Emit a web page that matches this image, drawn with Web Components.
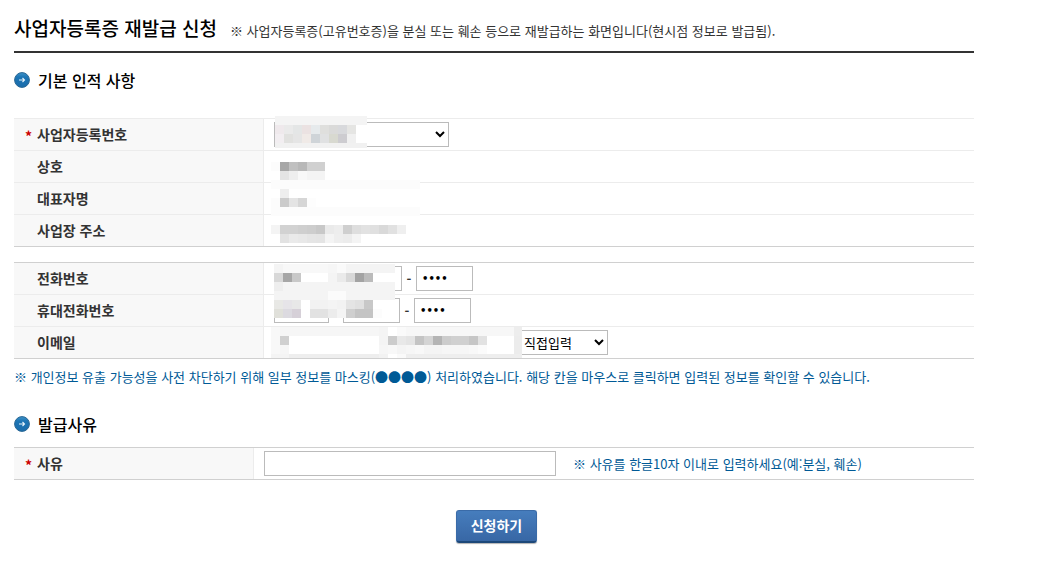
<!DOCTYPE html>
<html lang="ko">
<head>
<meta charset="UTF-8">
<meta name="viewport" content="width=device-width, initial-scale=1.0">
<title>사업자등록증 재발급 신청</title>
<style>
    body {
        margin: 0;
        background: #fff;
        color: #333;
        font: 13px/20px "Noto Sans CJK KR", sans-serif;
    }
</style>
</head>
<body>
<reissue-form></reissue-form>

<script>
class PageTitle extends HTMLElement {
    connectedCallback() {
        this.attachShadow({ mode: 'open' });
        this.shadowRoot.innerHTML = `
            <style>
                :host {
                    display: block;
                    border-bottom: 2px solid #333;
                }

                header {
                    display: flex;
                    align-items: baseline;
                    gap: 13px;
                    padding: 14px 0 9px;
                }

                h1 {
                    margin: 0;
                    font-size: 19px;
                    line-height: 28px;
                    font-weight: 500;
                    color: #000;
                }
            </style>
            <header>
                <h1><slot></slot></h1>
                <slot name="note"></slot>
            </header>
        `;
    }
}

class SectionTitle extends HTMLElement {
    connectedCallback() {
        this.attachShadow({ mode: 'open' });
        this.shadowRoot.innerHTML = `
            <style>
                :host {
                    display: block;
                }

                h2 {
                    display: flex;
                    align-items: center;
                    gap: 8px;
                    margin: 0;
                    font-size: 16px;
                    line-height: 24px;
                    font-weight: 500;
                    color: #000;
                }
            </style>
            <h2>
                <svg width="16" height="16" viewBox="0 0 16 16" aria-hidden="true">
                    <defs>
                        <linearGradient id="ball" x1="0" y1="0" x2="0" y2="1">
                            <stop offset="0" stop-color="#3f93c8"></stop>
                            <stop offset="0.3" stop-color="#1c75b5"></stop>
                            <stop offset="1" stop-color="#1a6cab"></stop>
                        </linearGradient>
                    </defs>
                    <circle cx="8" cy="8" r="7.4" fill="url(#ball)" stroke="#2a6794"></circle>
                    <path d="M5 8h5.5M8.5 6L10.5 8L8.5 10" fill="none" stroke="#e4f1fa" stroke-width="1.1"></path>
                </svg>
                <slot></slot>
            </h2>
        `;
    }
}

class FormRow extends HTMLElement {
    connectedCallback() {
        this.attachShadow({ mode: 'open' });
        const star = this.hasAttribute('required') ? '*' : '';
        this.shadowRoot.innerHTML = `
            <style>
                :host {
                    display: grid;
                    grid-template-columns: var(--label-width, 250px) 1fr;
                    min-height: 31px;
                    border-top: 1px solid #ececec;
                }

                .head {
                    display: grid;
                    grid-template-columns: 12px 1fr;
                    align-items: center;
                    padding: 0 0 2px 11px;
                    background: #f8f8f8;
                    border-right: 1px solid #ececec;
                    font-size: 14px;
                    font-weight: 700;
                }

                .star {
                    padding-top: 4px;
                    color: #c00;
                }

                .body {
                    position: relative;
                    display: flex;
                    align-items: center;
                    padding-left: 10px;
                }
            </style>
            <div class="head"><span class="star">${star}</span><slot name="label"></slot></div>
            <div class="body"><slot></slot></div>
        `;
    }
}

// Mosaic of 9px cells. Each line is a row: gray or rgb hex, "-" leaves the cell clear, "*n" repeats.
class PixelMask extends HTMLElement {
    connectedCallback() {
        this.attachShadow({ mode: 'open' });
        const w = this.getAttribute('width');
        const h = this.getAttribute('height');
        let rects = '';
        this.getAttribute('cells').split('/').forEach((row, y) => {
            let x = 0;
            row.trim().split(/\s+/).forEach(token => {
                const [value, times] = token.split('*');
                const span = Number(times || 1);
                if (value !== '-') {
                    const fill = value.length === 2 ? value.repeat(3) : value;
                    rects += `<rect x="${x * 9}" y="${y * 9}" width="${span * 9}" height="9" fill="#${fill}"/>`;
                }
                x += span;
            });
        });
        this.shadowRoot.innerHTML = `
            <style>
                :host {
                    position: absolute;
                    pointer-events: none;
                }

                svg {
                    display: block;
                }
            </style>
            <svg width="${w}" height="${h}" shape-rendering="crispEdges" aria-hidden="true">${rects}</svg>
        `;
    }
}

class ReissueForm extends HTMLElement {
    connectedCallback() {
        this.attachShadow({ mode: 'open' });
        this.shadowRoot.innerHTML = `
            <style>
                :host {
                    display: block;
                    max-width: 960px;
                    margin: 0 14px;
                }

                section-title {
                    padding: 15px 0 26px;
                }

                section-title.reason {
                    padding: 25px 0 11px;
                }

                .group {
                    border-bottom: 1px solid #d0d0d0;
                }

                .group + .group {
                    margin-top: 15px;
                }

                .strong {
                    border-top-color: #d0d0d0;
                }

                .short {
                    --label-width: 240px;
                }

                input,
                select {
                    box-sizing: border-box;
                    height: 25px;
                    margin: 0;
                    padding: 0 5px;
                    border: 1px solid #bbb;
                    border-radius: 0;
                    background: #fff;
                    color: #000;
                    font: inherit;
                }

                select {
                    padding: 0;
                }

                .part {
                    width: 57px;
                }

                .first {
                    width: 55px;
                }

                input[type="password"] {
                    font: 700 10px "DejaVu Sans", sans-serif;
                }

                .sep {
                    width: 14px;
                    font-weight: 700;
                    text-align: center;
                }

                .biz {
                    width: 175px;
                }

                .mail {
                    width: 106px;
                }

                .host {
                    width: 125px;
                }

                .direct {
                    width: 89px;
                }

                .reason-input {
                    width: 292px;
                    margin-right: 17px;
                }

                .note {
                    margin: 0;
                    color: #005a96;
                }

                .masking {
                    padding-top: 8px;
                }

                .m-biz { left: 11px; top: -3px; }
                .m-name { left: 7px; top: 11px; }
                .m-addr { left: 7px; top: 10px; }
                .m-phone { left: 10px; top: -31px; }
                .m-mail { left: 7px; top: 0; }

                .actions {
                    padding: 30px 0 24px 5px;
                    text-align: center;
                }

                button {
                    padding: 4px 14px 5px;
                    border: 1px solid #3a6ba8;
                    border-bottom: 2px solid #1d4879;
                    border-radius: 3px;
                    background: linear-gradient(#467dbd, #3867a5);
                    box-shadow: 0 1px 1px rgba(0, 0, 0, 0.3);
                    color: #fff;
                    font: 700 14px/21px "Noto Sans CJK KR", sans-serif;
                }
            </style>
            <page-title>사업자등록증 재발급 신청<span slot="note">※ 사업자등록증(고유번호증)을 분실 또는 훼손 등으로 재발급하는 화면입니다(현시점 정보로 발급됨).</span></page-title>

            <section-title>기본 인적 사항</section-title>
            <div class="group">
                <form-row required>
                    <label slot="label" for="biz">사업자등록번호</label>
                    <select id="biz" class="biz"><option></option></select>
                    <pixel-mask class="m-biz" width="92" height="32" cells="f4*11/efe9ec ea e4e6e6 ebe2e2 e6eaec dfdfdd dadad9 d8d9dc e5e5e3 ff*2/f2eef1 e1e1df e5 f0eae7 cfd4d8 e0e1e2 d8d9d0 cdccd0 f0 ff*2/f1*11"></pixel-mask>
                </form-row>
                <form-row>
                    <span slot="label">상호</span>
                    <pixel-mask class="m-name" width="149" height="54" cells="fc a7 c0 b8 d0*2/- e4 ee f8 f4*2/fc*17/ff ee ff*15/fc cb e4 d6 fd ff*12/fc*17"></pixel-mask>
                </form-row>
                <form-row>
                    <span slot="label">대표자명</span>
                </form-row>
                <form-row>
                    <span slot="label">사업장 주소</span>
                    <pixel-mask class="m-addr" width="135" height="18" cells="f4 d2*2 cf cd c8 ea ed cf de e2 e0 d9 e1 ef/- e2 ea e8 e5 e4 f4 ee ec f4"></pixel-mask>
                </form-row>
            </div>
            <div class="group">
                <form-row class="strong">
                    <label slot="label" for="tel3">전화번호</label>
                    <input class="part" aria-label="전화번호 앞자리"><span class="sep">-</span>
                    <input class="part" aria-label="전화번호 가운데자리"><span class="sep">-</span>
                    <input id="tel3" class="part" type="password" value="0000">
                </form-row>
                <form-row>
                    <label slot="label" for="cell3">휴대전화번호</label>
                    <input class="first" aria-label="휴대전화 앞자리"><span class="sep">-</span>
                    <input class="part" aria-label="휴대전화 가운데자리"><span class="sep">-</span>
                    <input id="cell3" class="part" type="password" value="0000">
                    <pixel-mask class="m-phone" width="121" height="54" cells="f4 f8*5 f6 fa f4*6/d8 a6 c8 ff*3 f4 ea d8 a3 bb ff*3/ee f4*13/f4*6 fb*2 f4*6/e8e8e5 e6e4e8 e8 ff f2*2 f4 f2 e4 e0 c8 ff*3/e0e0da dcdae0 d6d0d8 ff e2*2 ec f4 cf c4*2 fc ff*2"></pixel-mask>
                </form-row>
                <form-row>
                    <label slot="label" for="mail">이메일</label>
                    <input id="mail" class="mail"><span class="sep">@</span>
                    <input class="host" aria-label="이메일 도메인">
                    <select class="direct" aria-label="이메일 도메인 선택"><option>직접입력</option></select>
                    <pixel-mask class="m-mail" width="251" height="31" cells="f8 f6*11 f4 ff fa f7*12 ed/f8 d0 ff*10 f4 cc e8 e4 c4 d4 b4 cc d0*2 c6 e2 ff*3 ec/f8 f6 ff*10 f6 f8 f4 f6 f8 f4*2 f6*3 f8 fb ff*3 ec/f4*2 ee*10 f2 ff fa ee*13"></pixel-mask>
                </form-row>
            </div>
            <p class="note masking">※ 개인정보 유출 가능성을 사전 차단하기 위해 일부 정보를 마스킹(●●●●) 처리하였습니다. 해당 칸을 마우스로 클릭하면 입력된 정보를 확인할 수 있습니다.</p>

            <section-title class="reason">발급사유</section-title>
            <div class="group">
                <form-row class="strong short" required>
                    <label slot="label" for="reason">사유</label>
                    <input id="reason" class="reason-input">
                    <span class="note">※ 사유를 한글10자 이내로 입력하세요(예:분실, 훼손)</span>
                </form-row>
            </div>
            <div class="actions"><button type="button">신청하기</button></div>
        `;
    }
}

customElements.define('page-title', PageTitle);
customElements.define('section-title', SectionTitle);
customElements.define('form-row', FormRow);
customElements.define('pixel-mask', PixelMask);
customElements.define('reissue-form', ReissueForm);
</script>
</body>
</html>
